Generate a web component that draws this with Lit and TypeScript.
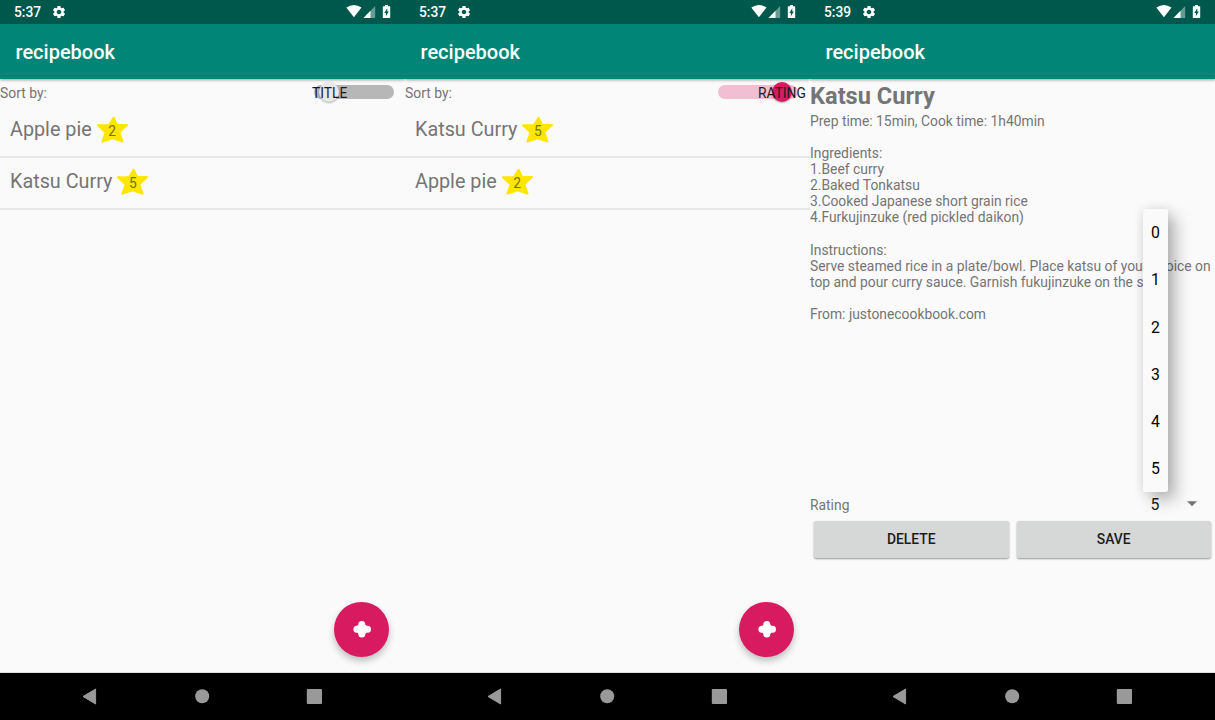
import { LitElement, html, css, svg } from "lit";
import { customElement, property } from "lit/decorators.js";

const gear = svg`<path d="M19.14 12.94c.04-.3.06-.61.06-.94 0-.32-.02-.64-.07-.94l2.03-1.58c.18-.14.23-.41.12-.61l-1.92-3.32c-.12-.22-.37-.29-.59-.22l-2.39.96c-.5-.38-1.03-.7-1.62-.94l-.36-2.54c-.04-.24-.24-.41-.48-.41h-3.84c-.24 0-.43.17-.47.41l-.36 2.54c-.59.24-1.13.57-1.62.94l-2.39-.96c-.22-.08-.47 0-.59.22L2.74 8.87c-.12.21-.08.47.12.61l2.03 1.58c-.05.3-.09.63-.09.94s.02.64.07.94l-2.03 1.58c-.18.14-.23.41-.12.61l1.92 3.32c.12.22.37.29.59.22l2.39-.96c.5.38 1.03.7 1.62.94l.36 2.54c.05.24.24.41.48.41h3.84c.24 0 .44-.17.47-.41l.36-2.54c.59-.24 1.13-.56 1.62-.94l2.39.96c.22.08.47 0 .59-.22l1.92-3.32c.12-.22.07-.47-.12-.61l-2.01-1.58zM12 15.6c-1.98 0-3.6-1.62-3.6-3.6s1.62-3.6 3.6-3.6 3.6 1.62 3.6 3.6-1.62 3.6-3.6 3.6z"/>`;

@customElement("phone-frame")
class PhoneFrame extends LitElement {
  @property() time = "";

  static styles = css`
    :host { display: flex; flex-direction: column; width: 405px; height: 720px; background: #fafafa; }
    .status { height: 24px; flex: none; background: #00574b; color: #fff; display: flex; align-items: center; padding: 0 13px 0 14px; font-size: 13.8px; font-weight: 500; line-height: 24px; }
    .time { width: 38px; }
    .gear { width: 14px; height: 14px; fill: #fff; }
    .indicators { width: 46px; height: 16px; margin-left: auto; fill: #fff; }
    .bar { height: 55px; flex: none; box-sizing: border-box; background: #008577; color: #fff; padding: 1px 0 0 15.5px; font-size: 20px; line-height: 55px; font-weight: 500; box-shadow: 0 1px 3px rgba(0, 0, 0, 0.38); clip-path: inset(0 0 -6px 0); }
    .content { flex: 1; min-height: 0; display: flex; flex-direction: column; }
    .nav { height: 47px; flex: none; background: #000; box-shadow: 0 -1px 0 #dedede; }
    .keys { display: block; width: 405px; height: 47px; fill: #999; }
  `;

  render() {
    return html`
      <div class="status">
        <span class="time">${this.time}</span>
        <svg class="gear" viewBox="1 1 22 22">${gear}</svg>
        <svg class="indicators" viewBox="0 0 46 16">
          <path d="M.3 3.6Q8 -1.4 15.5 3.6L7.9 13.2Z" />
          <path d="M29.2 2v12H17.5Z" fill-opacity=".4" />
          <path d="M24.5 6.8V14H17.5Z" />
          <path fill-rule="evenodd" d="M37.3 2.3h1.7V1h3v1.3h1.7q.5 0 .5.5V13.6q0 .5-.5.5h-6.4q-.5 0-.5-.5V2.8q0-.5.5-.5ZM41.3 4.2 38.3 9h1.6v3.3L42.8 7.5h-1.5Z" />
        </svg>
      </div>
      <div class="bar">recipebook</div>
      <div class="content"><slot></slot></div>
      <div class="nav">
        <svg class="keys" viewBox="0 0 405 47">
          <path d="M83 23.5 95.6 16v15Z" stroke="#999" stroke-width="1" stroke-linejoin="round" />
          <circle cx="202.2" cy="23.3" r="7" />
          <rect x="306.8" y="16" width="15.2" height="15" rx="1" />
        </svg>
      </div>
    `;
  }
}

interface Recipe { name: string; rating: number }

@customElement("recipe-list")
class RecipeList extends LitElement {
  @property({ attribute: false }) recipes: Recipe[] = [];
  @property({ type: Boolean, reflect: true }) rated = false;

  static styles = css`
    :host { display: flex; flex-direction: column; flex: 1; color: #757575; }
    .sort { height: 27px; display: flex; justify-content: space-between; align-items: flex-start; font-size: 13.9px; line-height: 28px; }
    .switch { position: relative; width: 98px; height: 26px; }
    .track { position: absolute; left: 7px; top: 6px; width: 80px; height: 14px; border-radius: 7px; background: #b7b7b7; }
    .thumb { position: absolute; left: 12px; top: 3px; width: 20px; height: 20px; border-radius: 50%; background: #e8e8e8; box-shadow: 0 1px 2px rgba(0, 0, 0, 0.3); }
    .mode { position: absolute; left: 5px; top: 0; font-size: 13.8px; color: #1c1c1c; }
    :host([rated]) .track { left: 6px; background: #f1bfd1; }
    :host([rated]) .thumb { left: 60px; background: #d81b60; }
    :host([rated]) .mode { left: 46px; }
    .row { height: 52px; box-sizing: border-box; padding: 0 10px; border-bottom: 2px solid #e6e6e6; display: flex; font-size: 19.8px; line-height: 48px; }
    .badge { width: 31px; height: 28px; margin: 10px 0 0 5px; display: grid; font-size: 13.8px; }
    .star { grid-area: 1 / 1; width: 31px; height: 28px; }
    .count { grid-area: 1 / 1; z-index: 1; text-align: center; line-height: 30px; color: #75701f; }
    .add { width: 55px; height: 55px; border-radius: 50%; margin: auto 16px 16px auto; background: #d81b60; box-shadow: 0 4px 7px rgba(0, 0, 0, 0.24); }
    .plus { display: block; width: 55px; height: 55px; }
  `;

  render() {
    return html`
      <div class="sort">
        <span>Sort by:</span>
        <div class="switch">
          <div class="track"></div>
          <div class="thumb"></div>
          <span class="mode">${this.rated ? "RATING" : "TITLE"}</span>
        </div>
      </div>
      ${this.recipes.map((r) => html`
        <div class="row">
          <span>${r.name}</span>
          <div class="badge">
            <svg class="star" viewBox="0 0 31 28">
              <path d="M16.6 1.7 20.2 9.1 30 8.9 22.3 16.2 25.5 25.6 15.7 22.4 5.4 25.6 8.6 16.4 1 9.2 11.8 9.3Z" fill="#ffe600" stroke="#ffe600" stroke-width="2" stroke-linejoin="round" />
            </svg>
            <span class="count">${r.rating}</span>
          </div>
        </div>
      `)}
      <div class="add">
        <svg class="plus" viewBox="0 0 55 55">
          <path d="M27.8 22.4v9.6M22.9 27.2h10.6" stroke="#fff" stroke-width="7" stroke-linecap="round" />
          <circle cx="27.9" cy="27.2" r="5.6" fill="#fff" />
        </svg>
      </div>
    `;
  }
}

@customElement("recipe-detail")
class RecipeDetail extends LitElement {
  static styles = css`
    :host { display: flex; flex-direction: column; flex: 1; color: #757575; font-size: 13.86px; line-height: 16.08px; }
    .title { font-size: 23.6px; line-height: 28px; font-weight: 700; padding-top: 3px; height: 31px; }
    .body { white-space: pre; height: 378px; }
    .rating { position: relative; height: 28px; display: flex; line-height: 28px; }
    .label { flex: 1; }
    .value { width: 24px; text-align: center; margin-right: 19.5px; font-size: 15.8px; line-height: 27px; color: #1c1c1c; }
    .caret { width: 10px; height: 6px; fill: #757575; margin: 10px 18.5px 0 0; }
    .menu { position: absolute; left: 333px; bottom: 27px; width: 25px; height: 283.5px; background: #fafafa; border-radius: 2px; box-shadow: 8px 8px 16px rgba(0, 0, 0, 0.26), 0 0 12px rgba(0, 0, 0, 0.11); color: #000; display: flex; flex-direction: column; }
    .option { flex: 1; display: grid; place-items: center; font-size: 15.8px; padding-top: 2px; }
    .actions { display: flex; gap: 8px; padding: 2px 4px 0 4px; }
    .button { flex: 1; height: 37px; background: #d6d8d7; border-radius: 2px; box-shadow: 0 1px 2px rgba(0, 0, 0, 0.4); color: #1c1c1c; font-weight: 500; text-align: center; line-height: 37px; }
  `;

  render() {
    const text = [
      "Prep time: 15min, Cook time: 1h40min", "",
      "Ingredients:", "1.Beef curry", "2.Baked Tonkatsu",
      "3.Cooked Japanese short grain rice",
      "4.Furkujinzuke (red pickled daikon)", "",
      "Instructions:",
      "Serve steamed rice in a plate/bowl. Place katsu of your choice on",
      "top and pour curry sauce. Garnish fukujinzuke on the side.", "",
      "From: justonecookbook.com",
    ].join("\n");
    return html`
      <div class="title">Katsu Curry</div>
      <div class="body">${text}</div>
      <div class="rating">
        <span class="label">Rating</span>
        <span class="value">5</span>
        <svg class="caret" viewBox="0 0 10 6"><path d="M0 .3h10L5 5.3Z" /></svg>
        <div class="menu">${[0, 1, 2, 3, 4, 5].map((n) => html`<div class="option">${n}</div>`)}</div>
      </div>
      <div class="actions">
        <div class="button">DELETE</div>
        <div class="button">SAVE</div>
      </div>
    `;
  }
}

const apple: Recipe = { name: "Apple pie", rating: 2 };
const katsu: Recipe = { name: "Katsu Curry", rating: 5 };

@customElement("app-root")
class AppRoot extends LitElement {
  static styles = css`
    :host { display: flex; width: 1215px; height: 720px; overflow: hidden; font-family: Roboto, sans-serif; }
  `;

  render() {
    return html`
      <phone-frame time="5:37"><recipe-list .recipes=${[apple, katsu]}></recipe-list></phone-frame>
      <phone-frame time="5:37"><recipe-list rated .recipes=${[katsu, apple]}></recipe-list></phone-frame>
      <phone-frame time="5:39"><recipe-detail></recipe-detail></phone-frame>
    `;
  }
}
